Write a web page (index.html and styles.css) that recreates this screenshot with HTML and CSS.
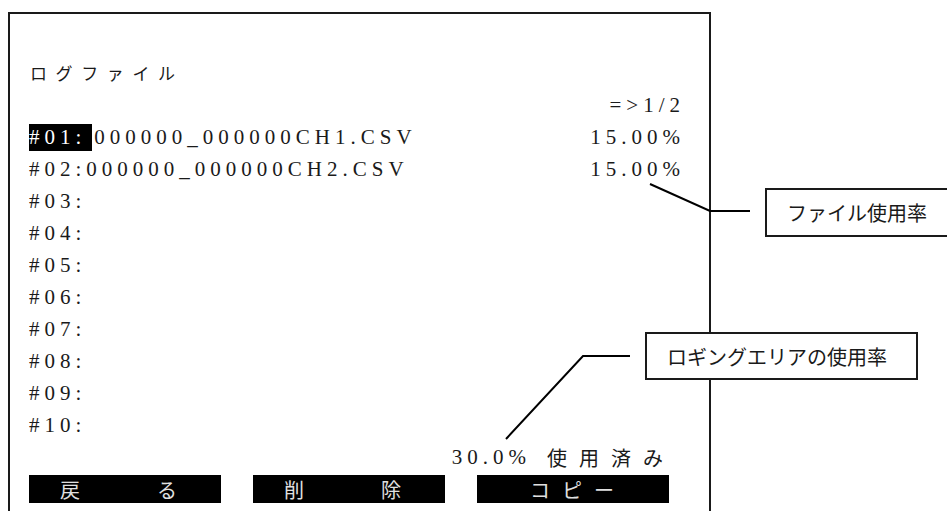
FILE: index.html
```html
<!DOCTYPE html>
<html lang="ja">
<head>
  <meta charset="UTF-8">
  <title>ログファイル</title>
  <link rel="stylesheet" href="styles.css">
</head>
<body>

  <div class="frame">
    <div class="title">ログファイル</div>
    <div class="row page"><span>=&gt;1/2</span></div>

    <div class="row"><span><span class="sel">#01:</span>000000_000000CH1.CSV</span><span>15.00%</span></div>
    <div class="row"><span>#02:000000_000000CH2.CSV</span><span>15.00%</span></div>
    <div class="row"><span>#03:</span></div>
    <div class="row"><span>#04:</span></div>
    <div class="row"><span>#05:</span></div>
    <div class="row"><span>#06:</span></div>
    <div class="row"><span>#07:</span></div>
    <div class="row"><span>#08:</span></div>
    <div class="row"><span>#09:</span></div>
    <div class="row"><span>#10:</span></div>

    <div class="row usage"><span class="pct">30.0%</span><span class="used">使用済み</span></div>

    <div class="buttons">
      <div class="btn"><span>戻</span><span>る</span></div>
      <div class="btn"><span>削</span><span>除</span></div>
      <div class="btn copy"><span>コ</span><span>ピ</span><span>ー</span></div>
    </div>
  </div>

  <!-- callout leader lines -->
  <svg class="leaders" width="947" height="511" viewBox="0 0 947 511">
    <polyline points="650,184 710,211 750,211" />
    <polyline points="506,439 583,356 630,356" />
  </svg>

  <div class="note note-file">ファイル使用率</div>
  <div class="note note-area">ロギングエリアの使用率</div>

</body>
</html>
```

FILE: styles.css
```css
body {
  margin: 0;
  background-color: #ffffff;
  color: #1a1a1a;
  font-family: "Liberation Serif", "Noto Sans CJK JP", serif;
  overflow: hidden;
  height: 511px;
}
.frame {
  box-sizing: border-box;
  width: 703px;
  height: 499px;
  margin: 12px 0 0 8px;
  border: 2px solid #1a1a1a;
  border-bottom: none;
  padding: 43px 0 0 19px;
}
.title {
  height: 32px;
  line-height: 32px;
  padding-left: 1px;
  font-family: "Noto Sans CJK JP", sans-serif;
  font-size: 17px;
  letter-spacing: 8.6px;
}
.row {
  width: 656px;
  height: 32px;
  display: flex;
  align-items: center;
  justify-content: space-between;
  font-size: 21px;
  letter-spacing: 5px;
  white-space: nowrap;
}
.page {
  justify-content: flex-end;
}
.sel {
  display: inline-block;
  background-color: #000000;
  color: #ffffff;
  line-height: 27px;
  padding-right: 6px;
  margin-right: 2px;
}
.usage {
  justify-content: flex-end;
  padding-right: 10px;
  box-sizing: border-box;
}
.used {
  margin-left: 16px;
  font-family: "Noto Sans CJK JP", sans-serif;
  font-size: 20px;
  letter-spacing: 12px;
}
.buttons {
  display: flex;
  gap: 32px;
  margin-top: 2px;
}
.btn {
  width: 192px;
  height: 28px;
  box-sizing: border-box;
  display: flex;
  align-items: center;
  gap: 77px;
  background-color: #000000;
  color: #e0e0e0;
  font-family: "Noto Sans CJK JP", sans-serif;
  font-size: 20px;
  padding-left: 31px;
  white-space: nowrap;
}
.btn.copy {
  padding-left: 53px;
  gap: 12px;
}
.leaders {
  position: absolute;
  top: 0;
  left: 0;
  pointer-events: none;
}
.leaders polyline {
  fill: none;
  stroke: #000000;
  stroke-width: 2;
}
.note {
  position: absolute;
  box-sizing: border-box;
  display: flex;
  align-items: center;
  background-color: #ffffff;
  border: 2px solid #1a1a1a;
  font-family: "Noto Sans CJK JP", sans-serif;
  font-size: 20px;
  padding-left: 20px;
  white-space: nowrap;
}
.note-file {
  left: 765px;
  top: 188px;
  width: 200px;
  height: 49px;
}
.note-area {
  left: 645px;
  top: 332px;
  width: 273px;
  height: 48px;
}
```
